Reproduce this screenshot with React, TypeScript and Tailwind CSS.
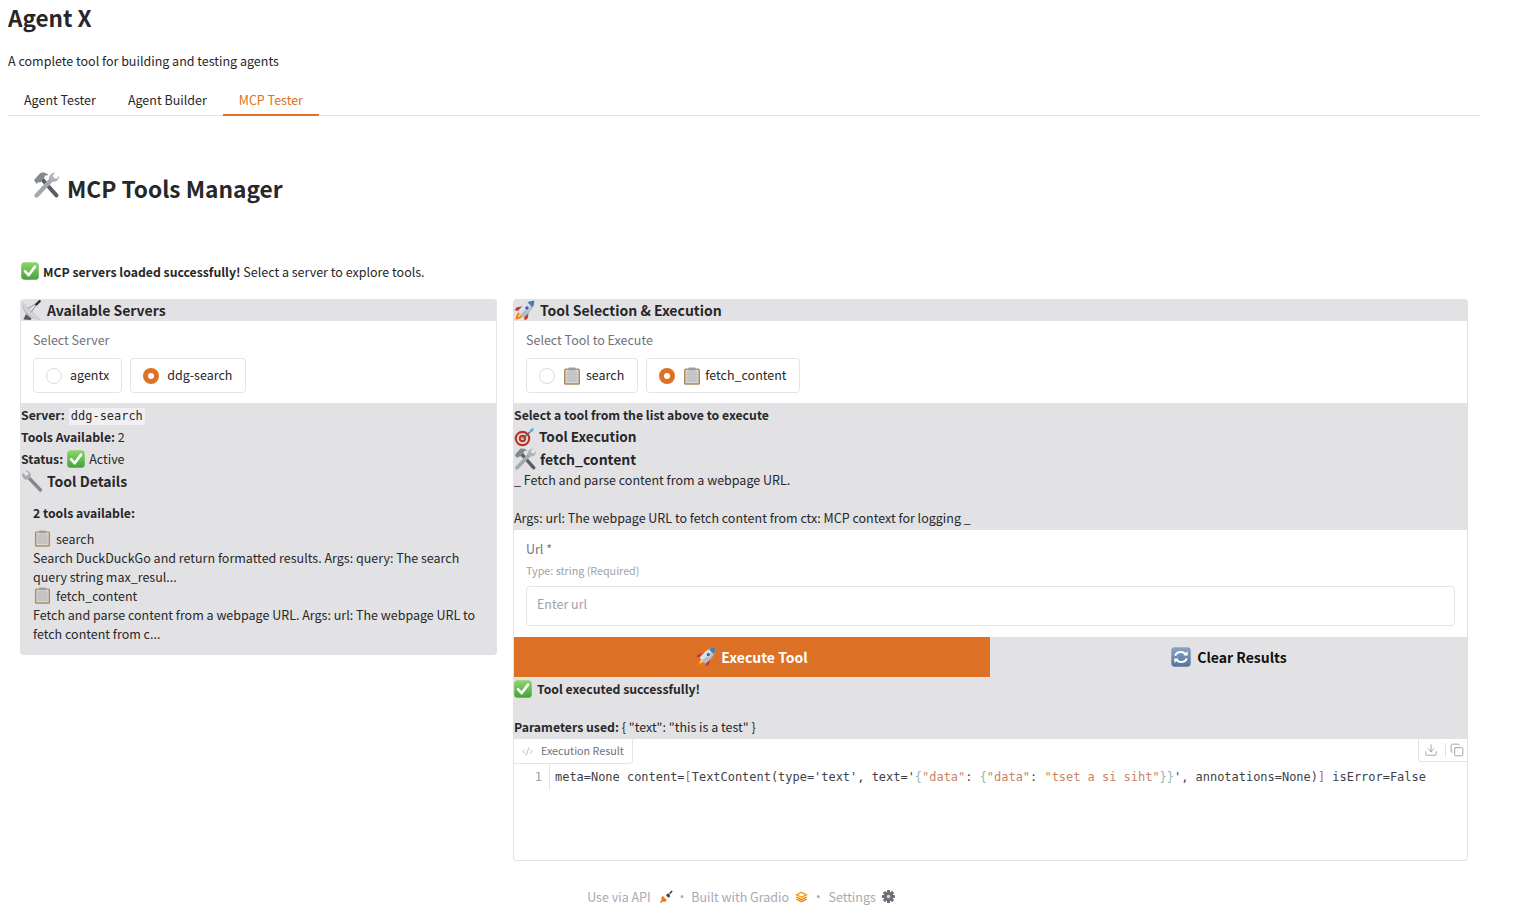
import React from "react";
import { Download, Copy, CodeXml } from "lucide-react";

const sans = "font-['Noto_Sans_CJK_SC','Source_Sans_Pro',sans-serif]";

function CheckEmoji({ size = 18 }: { size?: number }) {
  return (
    <svg width={size} height={size} viewBox="0 0 18 18" className="inline-block shrink-0">
      <defs>
        <linearGradient id="chk" x1="0" y1="0" x2="0" y2="1">
          <stop offset="0" stopColor="#8fd66a" />
          <stop offset="1" stopColor="#43a33a" />
        </linearGradient>
      </defs>
      <rect x="0.2" y="0.2" width="17.6" height="17.6" rx="3.5" fill="url(#chk)" />
      <path d="M4 9.2l3.6 4L14 4.6" fill="none" stroke="#fff" strokeWidth="2.6" strokeLinecap="round" strokeLinejoin="round" />
    </svg>
  );
}

function ToolsEmoji({ size = 26 }: { size?: number }) {
  return (
    <svg width={size} height={size} viewBox="0 0 26 26" className="inline-block shrink-0">
      <path d="M8 6L23.4 23.4" stroke="#5a5e64" strokeWidth="4" strokeLinecap="round" />
      <path d="M1 8L7.400 1C10.600 0 13.600 .8 15.400 3.200l-3.200.4-1 2.200-3.800 4.600-2.400-.2-1.400 1.800z" fill="#85898f" />
      <path d="M19 7L3.600 23.400" stroke="#a3a8ae" strokeWidth="4.400" strokeLinecap="round" />
      <path d="M16.400 8.400c-1.200-3.800 1.200-7.400 5.800-7.800l-2.600 3.400 1.400 2.200 3.200.2 1.800-3.200c.8 4-2.600 7.400-6.800 6.600z" fill="#aeb3b9" />
    </svg>
  );
}

function DishEmoji() {
  return (
    <svg width="21" height="21" viewBox="0 0 21 21" className="inline-block shrink-0">
      <path d="M2.500 19.500l2.400-5.500 5.600 4.400-.8 1.600z" fill="#55595e" />
      <path d="M1 1.500C.2 11 8 20 19.500 19.500z" fill="#a6a9ad" />
      <path d="M1 1.500L19.500 19.500c-2 1-8-.8-12.400-5.200C2.800 10 .2 4.400 1 1.500z" fill="#d0d2d5" />
      <path d="M7 8.500l8-5" stroke="#85898e" strokeWidth="0.900" />
      <path d="M10 12.500L16 4" stroke="#85898e" strokeWidth="0.900" />
      <path d="M15.400 4.400l3.200-3.200" stroke="#2f3235" strokeWidth="2.400" strokeLinecap="round" />
    </svg>
  );
}

function RocketEmoji({ size = 21 }: { size?: number }) {
  return (
    <svg width={size} height={size} viewBox="0 0 21 21" className="inline-block shrink-0">
      <g transform="rotate(45 10.500 10.500)">
        <path d="M7.800 15.800h5.400c.5 2.400-.8 5-2.700 7.400-1.900-2.400-3.200-5-2.700-7.400z" fill="#ee7b1a" />
        <path d="M9.200 16h2.600c.2 1.400-.3 2.800-1.300 4.200-1-1.400-1.500-2.800-1.300-4.200z" fill="#fbd44c" />
        <path d="M6.500 8.500L2.800 13.700l.4 3.500 3.800-2.200zM14.500 8.500l3.700 5.200-.4 3.500-3.800-2.200z" fill="#cf362c" />
        <path d="M10.500-3.200C14.500 0 15.800 5.500 14.800 15.800H6.200C5.200 5.500 6.500 0 10.500-3.200z" fill="#dde1e7" />
        <path d="M10.500-3.200C12.200-1.800 13.500 .2 14.200 2.600H6.800C7.500 .2 8.800-1.800 10.500-3.200z" fill="#4a79ab" />
        <path d="M10.500 2.600h3.700c.8 3.400 1.200 7.800.6 13.200h-4.300z" fill="#b3bbc6" />
        <circle cx="10.500" cy="7" r="2.300" fill="#3d6a9c" stroke="#f2f4f7" strokeWidth="0.900" />
      </g>
    </svg>
  );
}

function TargetEmoji() {
  return (
    <svg width="21" height="21" viewBox="0 0 21 21" className="inline-block shrink-0">
      <circle cx="8.500" cy="12.500" r="7.800" fill="#b9342e" />
      <circle cx="8.500" cy="12.500" r="5.600" fill="#e9ded8" />
      <circle cx="8.500" cy="12.500" r="3.700" fill="#b9342e" />
      <circle cx="8.500" cy="12.500" r="1.600" fill="#e9ded8" />
      <path d="M8.500 12.500l8-7" stroke="#5a6168" strokeWidth="1.200" />
      <path d="M15.800 5.800l.6-2.800 3.400-1-.6 3.200-3 1.200z" fill="#58b6d8" />
    </svg>
  );
}

function ClipboardEmoji({ size = 18 }: { size?: number }) {
  return (
    <svg width={size} height={size} viewBox="0 0 18 18" className="inline-block shrink-0">
      <rect x="1" y="1.600" width="16" height="16.200" rx="1.600" fill="#b08a5c" />
      <rect x="2.500" y="2.800" width="13" height="13.400" fill="#dadada" />
      <rect x="3.600" y="4.200" width="10.800" height="10.800" fill="#c4c4c4" />
      <rect x="5.400" y="0.400" width="7.200" height="3" rx="0.800" fill="#9a9ea3" />
    </svg>
  );
}

function WrenchEmoji() {
  return (
    <svg width="22" height="22" viewBox="0 0 22 22" className="inline-block shrink-0">
      <path d="M7 7l12.400 13" stroke="#83888e" strokeWidth="3.400" strokeLinecap="round" />
      <path d="M1.400 2.600L5 6.200 7.600 5.200 7.200 2.400 4 .8C7 .2 10 2.400 9.800 5.600c0 1.200-.6 2.200-1.200 3-1.800 1.400-4.400 1.400-6-.2C1.200 7 .8 4.600 1.400 2.600z" fill="#a7acb2" />
    </svg>
  );
}

function RefreshEmoji() {
  return (
    <svg width="20" height="20" viewBox="0 0 20 20" className="inline-block shrink-0">
      <defs>
        <linearGradient id="rfr" x1="0" y1="0" x2="0" y2="1">
          <stop offset="0" stopColor="#8aa4c4" />
          <stop offset="1" stopColor="#55729a" />
        </linearGradient>
      </defs>
      <rect x="0.300" y="0.300" width="19.400" height="19.400" rx="3.400" fill="url(#rfr)" />
      <path d="M4.200 8.600C5 6 7.400 5 10 5c2 0 3.400.8 4.400 2" fill="none" stroke="#fff" strokeWidth="2" />
      <path d="M12.400 8.400l4.400.2-.4-4.600z" fill="#fff" />
      <path d="M15.800 11.400C15 14 12.600 15 10 15c-2 0-3.400-.8-4.400-2" fill="none" stroke="#fff" strokeWidth="2" />
      <path d="M7.600 11.600l-4.400-.2.4 4.600z" fill="#fff" />
    </svg>
  );
}

function PlugIcon() {
  return (
    <svg width="13" height="13" viewBox="0 0 13 13" className="inline-block shrink-0">
      <path d="M.5 12.500l3-3" stroke="#ea7a1c" strokeWidth="1.600" />
      <path d="M2.600 5.800l4.400 4.400-1.800 1.400c-1 .6-2.400.2-3.200-.8-.8-1-1-2.400-.4-3.400z" fill="#ea7a1c" />
      <path d="M6 5.400l2.200 2.200 1-.2c1-.8 1-2.400.2-3.200s-1.800-.8-2.600 0z" fill="#3f4349" />
      <path d="M9.600 3.600l2.600-2.600" stroke="#3f4349" strokeWidth="1.500" />
    </svg>
  );
}

function GradioIcon() {
  return (
    <svg width="13" height="12" viewBox="0 0 14 12" className="inline-block shrink-0" fill="none">
      <path d="M7 1L12.600 3.600 7 6.200 1.400 3.600z" stroke="#f59e0b" strokeWidth="1.500" strokeLinejoin="round" />
      <path d="M1.400 6.200L7 8.800l5.600-2.600M1.400 8.400L7 11l5.600-2.600" stroke="#ee7d10" strokeWidth="1.400" strokeLinejoin="round" />
    </svg>
  );
}

function GearIcon() {
  return (
    <svg width="13" height="13" viewBox="0 0 13 13" className="inline-block shrink-0">
      {[0, 45, 90, 135].map((a) => (
        <rect key={a} x="5" y="0" width="3" height="13" rx="0.600" fill="#6b6f76" transform={`rotate(${a} 6.500 6.500)`} />
      ))}
      <circle cx="6.500" cy="6.500" r="4.600" fill="#6b6f76" />
      <circle cx="6.500" cy="6.500" r="1.800" fill="#d4d4d8" />
    </svg>
  );
}

function Radio({ checked }: { checked?: boolean }) {
  return checked ? (
    <span className="w-4 h-4 rounded-full bg-[#dd7126] flex items-center justify-center shrink-0">
      <span className="w-[6px] h-[6px] rounded-full bg-white" />
    </span>
  ) : (
    <span className="w-4 h-4 rounded-full border border-[#dcdce0] bg-white shrink-0" />
  );
}

function RadioOption({ checked, children }: { checked?: boolean; children: React.ReactNode }) {
  return (
    <div className="h-[35px] flex items-center gap-2 pl-[12px] pr-[12px] border border-[#e4e4e7] rounded-[4px] bg-white text-[12.500px] text-[#27272a]">
      <Radio checked={checked} />
      {children}
    </div>
  );
}

function RadioBlock({ label, children }: { label: string; children: React.ReactNode }) {
  return (
    <div className="h-[82px] bg-white px-3 pt-[9px] mx-px">
      <div className="text-[12.500px] leading-[19px] text-[#71717a] mb-[9px]">{label}</div>
      <div className="flex gap-2">{children}</div>
    </div>
  );
}

function ServersPanel() {
  return (
    <div className="w-[477px] h-[356px] bg-[#e2e2e5] rounded-[4px] text-[12.500px] leading-[22px] text-[#27272a]">
      <div className="h-[22px] flex items-center gap-[5px] pl-px text-[14px] font-semibold">
        <DishEmoji /> Available Servers
      </div>
      <RadioBlock label="Select Server">
        <RadioOption><span className="pb-[2px]">agentx</span></RadioOption>
        <RadioOption checked><span className="pb-[2px] pr-px">ddg-search</span></RadioOption>
      </RadioBlock>
      <div className="pl-px">
        <div className="mt-px flex items-center">
          <b className="font-semibold text-[12.250px]">Server:</b>
          <code className="ml-[4px] mt-[2px] px-[2px] bg-[#f0f0f2] font-['DejaVu_Sans_Mono',monospace] text-[11.960px] leading-[17px]">ddg-search</code>
        </div>
        <div><b className="font-semibold text-[12.250px]">Tools Available:</b> 2</div>
        <div className="flex items-center gap-[4px]"><b className="font-semibold text-[12.250px]">Status:</b> <CheckEmoji /> Active</div>
        <div className="flex items-center gap-[4px] text-[14px] font-semibold"><WrenchEmoji /> Tool Details</div>
      </div>
      <div className="px-[13px] pt-[12px] leading-[19px]">
        <b className="block font-semibold text-[12.250px] mb-[6px]">2 tools available:</b>
        <div className="flex items-center gap-[5px] pl-px"><ClipboardEmoji size={17} /> search</div>
        <div>Search DuckDuckGo and return formatted results. Args: query: The search query string max_resul...</div>
        <div className="flex items-center gap-[5px] pl-px"><ClipboardEmoji size={17} /> fetch_content</div>
        <div>Fetch and parse content from a webpage URL. Args: url: The webpage URL to fetch content from c...</div>
      </div>
    </div>
  );
}

function CodeOutput() {
  const mono = "font-['DejaVu_Sans_Mono',monospace]";
  return (
    <div className="h-[122px] bg-white border border-t-0 border-[#e4e4e7] rounded-b-[4px]">
      <div className="h-[25px] flex justify-between">
        <div className="h-[25px] flex items-center gap-[8px] pl-[8px] pr-[8px] border-r border-b border-[#e4e4e7] rounded-br-[4px] text-[10.750px] text-[#71717a]">
          <CodeXml size={11} strokeWidth={1.500} className="text-[#a1a1aa]" />
          Execution Result
        </div>
        <div className="h-[23px] w-[49px] flex items-center border-l border-b border-[#e4e4e7] rounded-bl-[4px]">
          <Download size={14} strokeWidth={1.300} className="ml-[5px] text-[#8a8a92]" />
          <span className="h-[14px] w-px bg-[#e4e4e7] ml-[7px]" />
          <Copy size={14} strokeWidth={1.300} className="ml-[4px] text-[#8a8a92]" />
        </div>
      </div>
      <div className={`flex text-[11.960px] leading-[26px] h-[26px] ${mono}`}>
        <div className="w-[36px] border-r border-[#e4e4e7] text-right pr-[7px] text-[#a1a1aa]">1</div>
        <div className="pl-[5px] whitespace-pre text-[#3f3f46]">
          meta=None content=<span className="text-[#c4635f]">[</span>TextContent(type='text', text='
          <span className="text-[#8fb8b4]">{"{"}</span>
          <span className="text-[#c9846a]">"data"</span>: <span className="text-[#8fb8b4]">{"{"}</span>
          <span className="text-[#c9846a]">"data"</span>: <span className="text-[#c9846a]">"tset a si siht"</span>
          <span className="text-[#8fb8b4]">{"}}"}</span>', annotations=None)<span className="text-[#c4635f]">]</span> isError=False
        </div>
      </div>
    </div>
  );
}

function ExecutionPanel() {
  return (
    <div className="w-[955px] bg-[#e2e2e5] rounded-[4px] text-[12.500px] leading-[22px] text-[#27272a]">
      <div className="h-[22px] flex items-center gap-[5px] pl-px text-[14px] font-semibold">
        <RocketEmoji /> Tool Selection &amp; Execution
      </div>
      <RadioBlock label="Select Tool to Execute">
        <RadioOption><ClipboardEmoji /><span className="-ml-[3px] pr-px pb-[2px]">search</span></RadioOption>
        <RadioOption checked><ClipboardEmoji /><span className="-ml-[4px] pb-[2px]">fetch_content</span></RadioOption>
      </RadioBlock>
      <div className="pl-px pt-px">
        <b className="block font-semibold text-[12.250px]">Select a tool from the list above to execute</b>
        <div className="-mt-px flex items-center gap-[4px] text-[13.600px] font-semibold"><TargetEmoji /> Tool Execution</div>
        <div className="mt-px flex items-center gap-[4px] text-[14px] font-semibold"><ToolsEmoji size={22} /> fetch_content</div>
        <div className="-mt-px leading-[21px]">_ Fetch and parse content from a webpage URL.</div>
        <div className="mt-[17px] leading-[22px]">Args: url: The webpage URL to fetch content from ctx: MCP context for logging _</div>
      </div>
      <div className="h-[107px] bg-white px-3 pt-[9px] mx-px mt-px">
        <div className="text-[12.500px] leading-[20px] text-[#71717a]">Url *</div>
        <div className="text-[10.750px] leading-[16px] text-[#a1a1aa] mt-[4px]">Type: string (Required)</div>
        <div className="mt-[7px] h-[40px] flex items-center px-[10px] pb-[4px] border border-[#e4e4e7] rounded-[4px] text-[#a1a1aa]">Enter url</div>
      </div>
      <div className="flex h-[40px] pl-px text-[14px] font-semibold">
        <div className="w-[476px] bg-[#dd7126] text-white flex items-center justify-center gap-[5px]">
          <RocketEmoji size={20} /> Execute Tool
        </div>
        <div className="flex-1 text-[#111] flex items-center justify-center gap-[6px]">
          <RefreshEmoji /> Clear Results
        </div>
      </div>
      <div className="pl-px pt-px pb-px">
        <div className="flex items-center gap-[5px] font-semibold text-[12.250px]"><CheckEmoji /> Tool executed successfully!</div>
        <div className="mt-[16px] leading-[22px]"><b className="font-semibold text-[12.250px]">Parameters used:</b> {'{ "text": "this is a test" }'}</div>
      </div>
      <CodeOutput />
    </div>
  );
}

function Footer() {
  return (
    <div className="h-[54px] flex items-start justify-center pt-[26px] pr-[6px] text-[12.500px] leading-[19px] text-[#a9a9b2]">
      <div className="flex items-center">
        <span>Use via API</span>
        <span className="ml-[9px] flex"><PlugIcon /></span>
        <span className="mx-[3px]">·</span>
        <span>Built with Gradio</span>
        <span className="ml-[6px] flex"><GradioIcon /></span>
        <span className="mx-[4px]">·</span>
        <span>Settings</span>
        <span className="ml-[6px] flex"><GearIcon /></span>
      </div>
    </div>
  );
}

export default function App() {
  return (
    <div className={`${sans} w-[1514px] bg-white`}>
      <div className="w-[1480px] pl-2">
        <h1 className="text-[22.500px] leading-[34px] font-semibold text-[#27272a]">Agent X</h1>
        <p className="mt-[17px] text-[12.500px] leading-[20px] text-[#27272a]">A complete tool for building and testing agents</p>
        <div className="mt-[13px] h-[32px] flex border-b border-[#e4e4e7] text-[12.500px]">
          <div className="px-4 pt-[2px] h-[31px] flex items-center text-[#27272a]">Agent Tester</div>
          <div className="px-4 pt-[2px] h-[31px] flex items-center text-[#27272a]">Agent Builder</div>
          <div className="px-4 pt-[2px] h-[32px] flex items-center text-[#dd7126] border-b-2 border-[#dd7126]">MCP Tester</div>
        </div>
        <div className="px-3">
          <div className="pl-[13px] pt-[56px] h-[137px] flex items-start gap-[8px]">
            <ToolsEmoji />
            <h2 className="text-[22.700px] leading-[36px] font-semibold text-[#27272a] -mt-px">MCP Tools Manager</h2>
          </div>
          <div className="h-[46px] pl-px pt-[9px] flex items-start gap-[4px] text-[12.500px] leading-[20px] text-[#27272a]">
            <CheckEmoji />
            <span><b className="font-semibold text-[12.250px]">MCP servers loaded successfully!</b> Select a server to explore tools.</span>
          </div>
          <div className="flex items-start gap-4">
            <ServersPanel />
            <ExecutionPanel />
          </div>
          <Footer />
        </div>
      </div>
    </div>
  );
}
